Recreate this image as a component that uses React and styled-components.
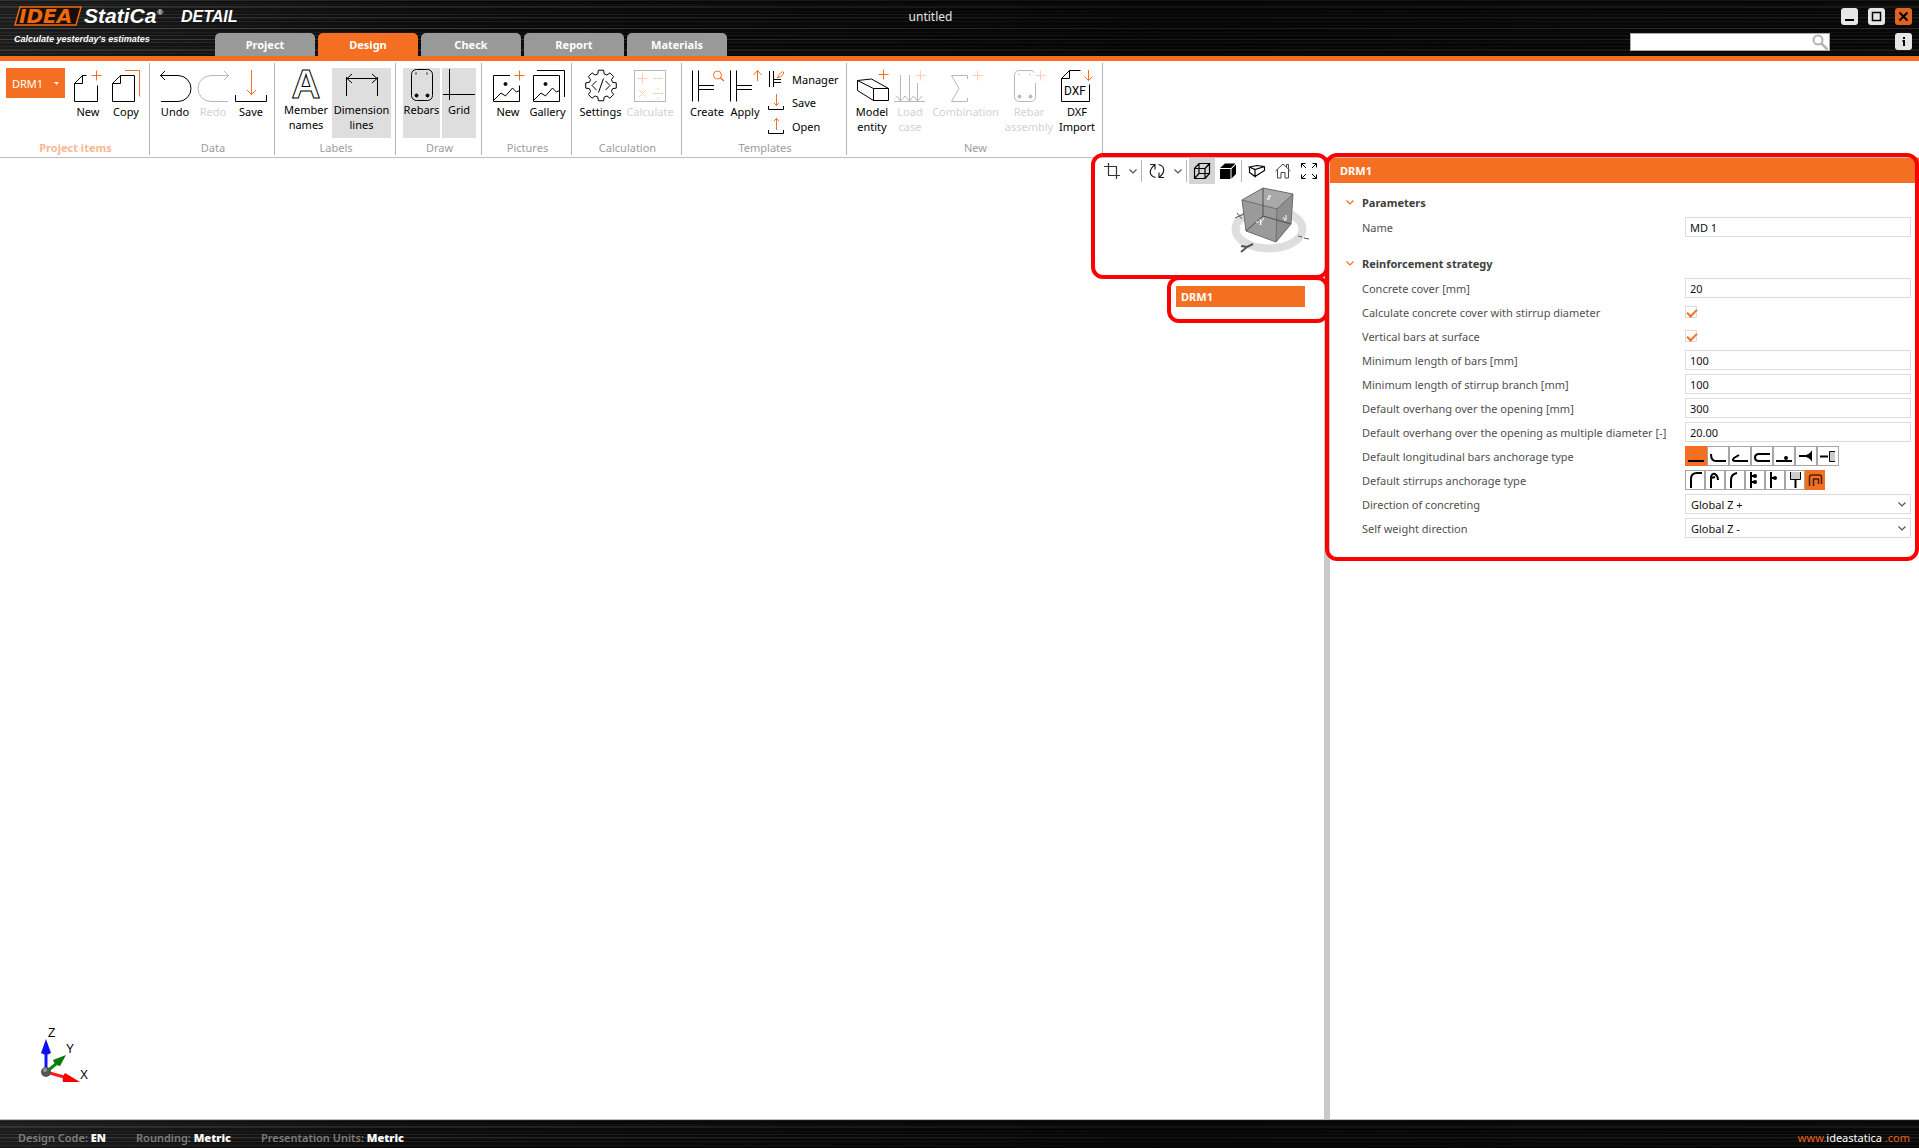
import React, { useState } from 'react'
import styled, { createGlobalStyle } from 'styled-components'


const orange = '#f46f22'
const paleOrange = '#fbcfb6'
const grey = '#b8b8b8'

const GlobalStyle = createGlobalStyle`
* {
    box-sizing: border-box;
}
body {
    margin: 0;
    background: #fff;
    color: #000;
    font-family: "Noto Sans", "Open Sans", sans-serif;
    font-size: 11px;
}
button, input, select {
    font: inherit;
    color: inherit;
    margin: 0;
}
svg {
    display: block;
    flex: none;
    overflow: visible;
}
`
const Page = styled.div`
min-height: 100vh;
display: flex;
flex-direction: column;
`
const brushed = `
background-color: #0b0b0b;
background-image:
    linear-gradient(100deg, rgba(255, 255, 255, 0.07), rgba(0, 0, 0, 0) 22%, rgba(0, 0, 0, 0.5) 60%, rgba(0, 0, 0, 0.3)),
    repeating-linear-gradient(180deg, rgba(255, 255, 255, 0.09) 0 1px, transparent 1px 4px, rgba(255, 255, 255, 0.05) 4px 5px, transparent 5px 7px),
    repeating-linear-gradient(180deg, transparent 0 6px, rgba(255, 255, 255, 0.12) 6px 7px, transparent 7px 11px);
`

/* ---------- header ---------- */

const Header = styled.header`
${brushed}
display: flex;
height: 61px;
border-bottom: 5px solid ${orange};
`
const Brand = styled.div`
width: 215px;
padding: 6px 0 0 14px;
color: #fff;
white-space: nowrap;
`
const Tagline = styled.div`
margin-top: 4px;
font: italic bold 9px/14px "Liberation Sans", sans-serif;
`
const HeaderBody = styled.div`
flex: 1;
display: flex;
flex-direction: column;
justify-content: space-between;
`
const TitleRow = styled.div`
display: flex;
padding-top: 8px;
`
const WindowTitle = styled.div`
flex: 1;
color: #e6e6e6;
font-size: 12px;
line-height: 17px;
text-align: center;
`
const WindowButtons = styled.div`
width: 273px;
display: flex;
justify-content: flex-end;
gap: 10px;
padding-right: 7px;
`
const WindowButton = styled.button`
width: 17px;
height: 17px;
padding: 0;
border: 0;
border-radius: 3px;
background: ${(props) => (props.$close ? '#dd6322' : '#e6e6e6')};
`
const TabRow = styled.div`
display: flex;
align-items: flex-start;
`
const Tabs = styled.nav`
flex: 1;
display: flex;
gap: 3px;
`
const Tab = styled.button`
width: 100px;
height: 23px;
padding: 0;
border: 0;
border-radius: 5px 5px 0 0;
background: ${(props) => (props.$active ? orange : '#999')};
color: #fff;
font-weight: 700;
`
const SearchBox = styled.label`
display: flex;
align-items: center;
width: 200px;
height: 18px;
padding-right: 1px;
background: #fff;
border: 1px solid #aaa;

input {
    flex: 1;
    min-width: 0;
    border: 0;
    outline: none;
    background: transparent;
}
`
const InfoSlot = styled.div`
width: 89px;
display: flex;
justify-content: flex-end;
padding-right: 7px;
`

/* ---------- ribbon ---------- */

const Ribbon = styled.div`
display: flex;
padding: 2px 0;
border-bottom: 1px solid #bdbdbd;
`
const Group = styled.section`
height: 92px;
display: flex;
flex-direction: column;
padding: 5px 4px 0 6px;
border-right: 1px solid #b5b5b5;
`
const GroupItems = styled.div`
height: 70px;
display: flex;
justify-content: center;
gap: ${(props) => props.$gap || 0}px;
padding: 0 ${(props) => props.$pad || 0}px;
`
const GroupLabel = styled.div`
color: ${(props) => (props.$accent ? '#f9b792' : '#9c9c9c')};
font-weight: ${(props) => (props.$accent ? 700 : 400)};
line-height: 19px;
text-align: center;
`
const RibbonButton = styled.button`
width: ${(props) => props.$width}px;
height: 70px;
display: flex;
flex-direction: column;
align-items: center;
gap: ${(props) => (props.$tight ? 1 : 2)}px;
padding: ${(props) => (props.$tight ? 1 : 2)}px 0 0;
border: 0;
background: ${(props) => (props.$on ? '#dedede' : 'transparent')};
color: #000;
line-height: 15px;

&:disabled {
    color: #d2d2d2;
}
span {
    white-space: pre;
}
`
const ItemButton = styled.button`
width: 59px;
height: 30px;
display: flex;
align-items: center;
justify-content: space-between;
margin-right: 4px;
padding: 0 6px;
border: 0;
background: ${orange};
color: #fff;
`
const SmallList = styled.div`
width: 78px;
display: flex;
flex-direction: column;
`
const SmallButton = styled.button`
height: 24px;
display: flex;
align-items: center;
gap: 7px;
padding: 0 0 0 4px;
border: 0;
background: transparent;
`

/* ---------- workspace ---------- */

const Workspace = styled.main`
flex: 1;
display: flex;
`
const Canvas = styled.section`
flex: 1;
display: flex;
flex-direction: column;
align-items: flex-end;
`
const Splitter = styled.div`
width: 6px;
background: #c9c9c9;
`
const Frame = styled.div`
position: absolute;
inset: ${(props) => props.$inset || '-5px'};
border: 4px solid #fe0000;
border-radius: 12px;
pointer-events: none;
z-index: 1;
`
const ViewArea = styled.div`
position: relative;
width: 228px;
height: 117px;
display: flex;
flex-direction: column;
align-items: flex-end;
gap: 3px;
padding-right: 2px;
`
const ViewToolbar = styled.div`
display: flex;
align-items: center;
`
const ViewButton = styled.button`
width: ${(props) => (props.$narrow ? 16 : 26)}px;
height: 26px;
display: flex;
align-items: center;
justify-content: center;
padding: 0;
border: 0;
background: ${(props) => (props.$on ? '#d5d5d5' : 'transparent')};
`
const ViewDivider = styled.div`
width: 1px;
height: 22px;
margin-right: 2px;
background: #b5b5b5;
`
const CubeSlot = styled.div`
padding-right: 8px;
`
const TagArea = styled.div`
position: relative;
width: 152px;
margin-top: 6px;
padding: 5px 19px 11px 4px;
`
const Tag = styled.button`
width: 100%;
height: 21px;
display: block;
padding: 0 5px;
border: 0;
background: ${orange};
color: #fff;
font-weight: 700;
line-height: 20px;
text-align: left;
`
const TriadSlot = styled.div`
align-self: flex-start;
margin-top: auto;
padding: 0 0 29px 36px;
`

/* ---------- properties ---------- */

const Side = styled.aside`
flex: 0 0 589px;
`
const Properties = styled.div`
position: relative;
padding-bottom: 20px;
`
const PropertiesTitle = styled.div`
padding: 0 10px;
background: ${orange};
color: #fff;
font-weight: 700;
line-height: 25px;
`
const Section = styled.section`
padding: 7px 8px 0 32px;

& + & {
    padding-top: 11px;
}
`
const SectionTitle = styled.button`
height: 24px;
display: flex;
align-items: center;
gap: 8px;
margin: 0 0 2px -16px;
padding: 0;
border: 0;
background: transparent;
color: #404040;
font-weight: 700;
`
const Row = styled.div`
height: 24px;
display: grid;
grid-template-columns: 323px 1fr;
align-items: center;
padding-bottom: 2px;
color: #505050;
white-space: nowrap;
`
const TextField = styled.input`
width: 100%;
height: 20px;
padding: 0 4px;
border: 1px solid #dcdcdc;
border-radius: 0;
outline: none;
color: #111;
`
const Check = styled.input`
appearance: none;
width: 12px;
height: 12px;
display: block;
position: relative;
border: 1px solid #dcdcdc;

&:checked::after {
    content: "";
    position: absolute;
    left: 1px;
    top: 2px;
    width: 8px;
    height: 4px;
    border: solid ${orange};
    border-width: 0 0 2px 2px;
    transform: rotate(-45deg);
}
`
const SelectBox = styled.div`
display: grid;
align-items: center;

select, svg {
    grid-area: 1 / 1;
}
select {
    appearance: none;
    width: 100%;
    height: 20px;
    padding: 0 5px;
    border: 1px solid #dcdcdc;
    border-radius: 0;
    background: #fff;
    color: #111;
}
svg {
    justify-self: end;
    margin-right: 5px;
    pointer-events: none;
}
`
const Choices = styled.div`
display: flex;
`
const Choice = styled.button`
width: ${(props) => props.$width}px;
height: 20px;
display: flex;
align-items: center;
justify-content: center;
padding: 0;
border: 1px solid ${(props) => (props.$on ? orange : '#a6a6a6')};
background: ${(props) => (props.$on ? orange : '#fff')};
`

/* ---------- footer ---------- */

const Footer = styled.footer`
${brushed}
height: 29px;
display: flex;
align-items: center;
gap: 30px;
padding: 7px 9px 0 18px;
border-top: 1px solid #b9beb9;
color: #7d7d7d;
font-weight: 600;

b {
    color: #fff;
}
`
const SiteLink = styled.a`
margin-left: auto;
color: #e8631c;
font-weight: 400;
text-decoration: none;

span {
    color: #fff;
}
`

/* ---------- icons ---------- */

const Icon = ({ size = 32, height, color = '#000', children }) => (
    <svg width={size} height={height || size} fill="none" stroke={color} strokeWidth="1" aria-hidden="true">
        {children}
    </svg>
)

const Plus = ({ x, y, pale }) => (
    <path d={`M${x} ${y - 5}v10M${x - 5} ${y}h10`} stroke={pale ? paleOrange : orange} />
)

const Chevron = ({ color = '#555' }) => (
    <Icon size={8} height={5} color={color}><path d="M.5 .5L4 4L7.5 .5" strokeWidth="1.2" /></Icon>
)

const teeth = () => {
    const points = []
    for (let i = 0; i < 8; i++) {
        const a = (i * Math.PI) / 4
        const spots = [[-0.27, 12], [-0.17, 15.5], [0.17, 15.5], [0.27, 12]]
        spots.forEach(([d, r]) => points.push(`${16 + r * Math.sin(a + d)},${15.5 - r * Math.cos(a + d)}`))
    }
    return points.join(' ')
}

const picture = 'M1.5 30.5L9 23L13.5 26L20.5 18L24.5 22L27.5 20.5'
const beam = 'M1.5 .5V31.5M7.5 .5V31.5M7.5 15.5H23M7.5 19.5H23'

const icons = {
    newItem: <Icon><path d="M14.5 5.5H10.5L2.5 13.5V31.5H25.5V15.5M10.5 5.5V13.5H2.5" /><Plus x={24.5} y={5.5} /></Icon>,
    copy: <Icon><path d="M10.5 5.5H24.5V31.5H2.5V13.5ZM10.5 5.5V13.5H2.5" /><path d="M15 .5H29.5V26.5" stroke={orange} /></Icon>,
    undo: <Icon><path d="M1.5 5.5H19a13 13 0 0 1 0 26H2M6 1L1.5 5.5L6 10" /></Icon>,
    redo: <Icon color={grey}><path d="M31.5 5.5H14a13 13 0 0 0 0 26H31M27 1L31.5 5.5L27 10" /></Icon>,
    save: <Icon><path d="M.5 25V31.5H31.5V25" /><path d="M16.5 0V24.5M12 20L16.5 24.5L21 20" stroke={orange} /></Icon>,
    names: (
        <Icon>
            <text x="16" y="29" textAnchor="middle" fontFamily="Liberation Sans, sans-serif" fontWeight="700" fontSize="40">A</text>
        </Icon>
    ),
    dimension: <Icon><path d="M.5 8V27M31.5 8V27M1 9.5H31M6 5L1 9.5L6 14M26 5L31 9.5L26 14" /></Icon>,
    rebars: (
        <Icon>
            <rect x="5.5" y=".5" width="21" height="31" rx="5" />
            <path d="M9.5 4.5h1M20.5 4.5h1" strokeWidth="2" />
            <circle cx="10.5" cy="26.5" r="1.5" fill="#000" /><circle cx="21.5" cy="26.5" r="1.5" fill="#000" />
        </Icon>
    ),
    grid: <Icon><path d="M6.5 0V31M0 25.5H32" /></Icon>,
    pictureNew: <Icon><path d={`M18 5.5H1.5V31.5H27.5V15.5${picture}`} /><circle cx="13.5" cy="14" r="1.5" fill="#000" /><Plus x={27.5} y={5.5} /></Icon>,
    gallery: <Icon><path d={`M1.5 5.5H27.5V31.5H1.5Z${picture}M5 .5H32.5V27`} /><circle cx="13.5" cy="14" r="1.5" fill="#000" /></Icon>,
    settings: <Icon><polygon points={teeth()} strokeLinejoin="round" /><path d="M11.5 11L7 15.5L11.5 20M20.5 11L25 15.5L20.5 20M18.5 8.5L13.5 22.5" /></Icon>,
    calculate: (
        <Icon color={grey}>
            <rect x=".5" y=".5" width="31" height="31" />
            <g stroke={paleOrange}>
                <path d="M8.5 3.5v10M3.5 8.5h10M19 8.5h10M5 20l7 7M12 20l-7 7M19 23.5h10" />
                <path d="M23.5 19h1M23.5 28h1" strokeWidth="2" />
            </g>
        </Icon>
    ),
    create: <Icon><path d={beam} /><g stroke={orange}><circle cx="26.5" cy="5" r="4" /><path d="M29.5 8L33 11" strokeWidth="1.5" /></g></Icon>,
    apply: <Icon><path d={beam} /><path d="M28.5 11V.5M24.5 5L28.5 .5L32.5 5" stroke={orange} /></Icon>,
    manager: <Icon size={17}><path d="M1.5 0V16M5.5 0V16M5.5 8.5H13M5.5 11.5H13" /><path d="M9.5 7L11 3.5L14.5 .5L16 2L13 5.5Z" stroke={orange} /></Icon>,
    saveSmall: <Icon size={17}><path d="M.5 12V15.5H15.5V12" /><path d="M8.5 0V11.5M6 9L8.5 11.5L11 9" stroke={orange} /></Icon>,
    openSmall: <Icon size={17}><path d="M.5 12V15.5H15.5V12" /><path d="M8.5 12V.5M6 3L8.5 .5L11 3" stroke={orange} /></Icon>,
    entity: <Icon><path d="M17.5 18.5H32.5V30.5H17.5ZM17.5 18.5L1.5 10.5L15.5 9L32.5 18.5M1.5 10.5V20.5L17.5 30.5" /><Plus x={27.5} y={4.5} /></Icon>,
    load: <Icon color={grey}><path d="M0 31.5H31M6.5 5V31M15.5 5V31M23.5 13V31M2.5 26L6.5 31L11 26L15.5 31L19.5 26L23.5 31L28 26" /><Plus x={26.5} y={5.5} pale /></Icon>,
    combination: <Icon color={grey}><path d="M17.5 9V5.5H1.5L9 18.5L1.5 31.5H17.5V28" /><Plus x={27.5} y={5.5} pale /></Icon>,
    rebarAssembly: (
        <Icon color={grey}>
            <path d="M21.5 2.5Q20 .5 17 .5H6.5Q1.5 .5 1.5 5.5V26.5Q1.5 31.5 6.5 31.5H17.5Q22.5 31.5 22.5 26.5V13" />
            <path d="M5.5 4.5h1M16.5 4.5h1" strokeWidth="2" />
            <circle cx="6.5" cy="26.5" r="1.5" fill={grey} /><circle cx="17.5" cy="26.5" r="1.5" fill={grey} />
            <Plus x={27.5} y={5.5} pale />
        </Icon>
    ),
    dxf: (
        <Icon>
            <path d="M19.5 .5H8.5L.5 8.5V31.5H28.5V14.5M8.5 .5V8.5H.5" />
            <text x="14" y="25" textAnchor="middle" fontFamily="Roboto, sans-serif" fontSize="12" fill="#000" stroke="none">DXF</text>
            <path d="M27.5 0V10.5M23.5 6.5L27.5 10.5L31.5 6.5" stroke={orange} />
        </Icon>
    ),
    crop: <Icon size={16} color="#333"><path d="M4.5 0V12.5H16M0 3.5H12.5V16" strokeWidth="1.2" /></Icon>,
    rotate: <Icon size={16} color="#222"><path d="M6.5 14.5C0 13 -.5 7 5.5 2M1 1.5H6V6.5M9.5 1.500C16 3 16.500 9 10.500 14M15 14.500H10V9.500" strokeWidth="1.2" /></Icon>,
    wireCube: <Icon size={16}><path d="M.5 5.5H11V15.5H.5ZM.5 5.5L5 .5H15.5L11 5.5M15.5 .5V10.5L11 15.5M5 .5V10.5H15.5M5 10.5L.5 15.5" strokeWidth="1.2" /></Icon>,
    solidCube: <Icon size={16}><path d="M0 6H10.5V16H0ZM0 5L5 .5H15.5L11 5ZM11.5 6L16 1.5V11L11.5 15.5Z" fill="#000" stroke="none" /></Icon>,
    slab: <Icon size={16} height={12}><path d="M.5 2L8 .5L15.5 1.5L6 4.5ZM.5 2V7.5L6 11.5V4.5M6 11.5L15.5 5.5V1.5" strokeWidth="1.2" /></Icon>,
    home: <Icon size={16} color="#444"><path d="M.5 8L8 1L15.5 8M2.5 6.5V15H6V9.5H10V15H13.5V6.5M11.5 4V1.5H13.5V6" /></Icon>,
    expand: <Icon size={16}><path d="M.5 4.5V.5H4.5M.5 .5L5 5M11.5 .5H15.5V4.5M15.5 .5L11 5M.5 11.5V15.5H4.5M.5 15.5L5 11M15.5 11.5V15.5H11.5M15.5 15.5L11 11" /></Icon>,
}

const Logo = () => (
    <svg width="200" height="22" role="img" aria-label="IDEA StatiCa DETAIL">
        <path d="M6 1H67L62 19H1Z" fill="#1a0d04" stroke="#ee6a10" strokeWidth="1.5" />
        <g fontStyle="italic" fontFamily="Liberation Sans, sans-serif" fontWeight="700">
            <text x="5" y="17" fontSize="20" fontFamily="DejaVu Sans, sans-serif" fill="#ee6a10">IDEA</text>
            <text x="70" y="17" fontSize="21" fill="#fff">StatiCa</text>
            <text x="143" y="9" fontSize="8" fill="#fff">®</text>
            <text x="167" y="16" fontSize="16" fill="#fff">DETAIL</text>
        </g>
    </svg>
)

const ViewCube = () => (
    <svg width="84" height="66" role="img" aria-label="View cube">
        <ellipse cx="39" cy="42" rx="33.5" ry="19.5" fill="none" stroke="#dedede" strokeWidth="8" />
        <path d="M33 1L63 7L61 37L46 55L16 44L12 13Z" fill="#9a9a9a" />
        <path d="M33 1L63 7L47 22L12 13Z" fill="#a9a9a9" />
        <path d="M47 22L63 7L61 37L46 55Z" fill="#8f8f8f" />
        <path d="M33 1L63 7L61 37L46 55L16 44L12 13ZM12 13L47 22L63 7M47 22L46 55" fill="none" stroke="#6d6d6d" />
        <path d="M33 1V29L16 44M33 29L61 37" fill="none" stroke="#4f4f4f" />
        <g stroke="#fff" fill="none">
            <path d="M37 12L41 9M38 9L41 9M37 12L40 12" />
            <path d="M26 35H29M30 32L31 38M34 31L31 35L30 38M53 30L55 33M56 28V33L54 33" />
        </g>
        <g stroke="#555" fill="none">
            <path d="M5 31L14 27M7 26L12 32M68 49L72 50M74 51L79 52" />
            <path d="M11 65L17 60M11 59L17 60L23 57" strokeWidth="2" />
        </g>
    </svg>
)

const Triad = () => (
    <svg width="60" height="66" role="img" aria-label="Axes X Y Z">
        <path d="M10 48V29" stroke="#1414ff" strokeWidth="3" />
        <path d="M10 15L15 29Q10 32 5 29Z" fill="#0f0ff5" />
        <path d="M10 48L20 40" stroke="#0a8a0a" strokeWidth="3" />
        <path d="M30 31L24 42Q18 41 17 36Z" fill="#067a06" />
        <path d="M10 48L28 53" stroke="#ff1a1a" strokeWidth="3" />
        <path d="M44 58L29 49Q26 53 27 58Z" fill="#f80000" />
        <circle cx="10" cy="48" r="5" fill="#555" />
        <circle cx="9" cy="46" r="2" fill="#999" />
        <g fontFamily="Liberation Sans, sans-serif" fontSize="12" fill="#000">
            <text x="12" y="13">Z</text>
            <text x="30" y="29">Y</text>
            <text x="44" y="55">X</text>
        </g>
    </svg>
)

const bars = [
    ['Straight bar', <path key="a" d="M2 14H18" />],
    ['Bend', <path key="b" d="M3 7Q3 14 8 14H18" />],
    ['Hook', <path key="c" d="M9 8L4 11Q1 14 6 14H18" />],
    ['Loop', <path key="d" d="M18 7H7Q3 7 3 10.5Q3 14 7 14H18" />],
    ['Welded transverse bar', <g key="e"><path d="M2 14H18" /><circle cx="12" cy="11" r="2" fill="#000" stroke="none" /></g>],
    ['Headed bar', <g key="f"><path d="M3 9H13" /><path d="M10 8Q14 7 16 3V15Q14 11 10 10Z" fill="#000" stroke="none" /></g>],
    ['Plate', <g key="g"><path d="M2 9.5H10" /><path d="M17 4.5H11.5V14.5H17" fill="#ccc" strokeWidth="1" /></g>],
]

const stirrups = [
    ['Bend', <path key="a" d="M5 17V8Q5 2 11 2H16" />],
    ['Hook', <path key="b" d="M5 17V6Q6 2 9 3Q12 5 12 9M5 7L9 6" />],
    ['Angled bend', <path key="c" d="M5 17V9Q5 3 11 2" />],
    ['Two transverse bars', <g key="d"><path d="M5 1V17M5 5H9M5 11H9" /><circle cx="9" cy="5" r="2" fill="#000" stroke="none" /><circle cx="9" cy="11" r="2" fill="#000" stroke="none" /></g>],
    ['One transverse bar', <g key="e"><path d="M5 1V17M5 7H9" /><circle cx="9" cy="7" r="2" fill="#000" stroke="none" /></g>],
    ['Plate', <g key="f"><path d="M4.5 1V8.5H14.5V1" fill="#ccc" strokeWidth="1" /><path d="M9.5 9V17" /></g>],
    ['Closed', <path key="g" d="M3.5 15V6Q3.5 4 6 4H13Q15.5 4 15.5 6V13M7.5 15V8H12.5V13" strokeWidth="1.5" stroke="#4a2008" />],
]

/* ---------- parts ---------- */

const Tool = ({ icon, label, width, ...rest }) => (
    <RibbonButton $width={width} {...rest}>
        {icons[icon]}
        <span>{label}</span>
    </RibbonButton>
)

const RibbonGroup = ({ label, gap, pad, accent, children }) => (
    <Group>
        <GroupItems $gap={gap} $pad={pad}>{children}</GroupItems>
        <GroupLabel $accent={accent}>{label}</GroupLabel>
    </Group>
)

const TextRow = ({ id, label, value }) => (
    <Row>
        <label htmlFor={id}>{label}</label>
        <TextField id={id} type="text" defaultValue={value} />
    </Row>
)

const CheckRow = ({ id, label }) => (
    <Row>
        <label htmlFor={id}>{label}</label>
        <Check id={id} type="checkbox" defaultChecked />
    </Row>
)

const ChoiceRow = ({ id, label, options, width, initial }) => {
    const [selected, setSelected] = useState(initial)
    return (
        <Row>
            <span id={id}>{label}</span>
            <Choices role="group" aria-labelledby={id}>
                {options.map(([name, drawing], i) => (
                    <Choice
                        key={name}
                        type="button"
                        aria-label={name}
                        aria-pressed={i === selected}
                        $on={i === selected}
                        $width={width}
                        onClick={() => setSelected(i)}
                    >
                        <svg width={width - 2} height="18" fill="none" stroke="#000" strokeWidth="2">{drawing}</svg>
                    </Choice>
                ))}
            </Choices>
        </Row>
    )
}

const SelectRow = ({ id, label, value }) => (
    <Row>
        <label htmlFor={id}>{label}</label>
        <SelectBox>
            <select id={id} defaultValue={value}>
                <option>Global Z +</option>
                <option>Global Z -</option>
            </select>
            <Chevron />
        </SelectBox>
    </Row>
)

const tabs = ['Project', 'Design', 'Check', 'Report', 'Materials']

const App = () => {
    const [tab, setTab] = useState('Design')

    return (
        <Page>
            <GlobalStyle />
            <Header>
                <Brand>
                    <Logo />
                    <Tagline>Calculate yesterday's estimates</Tagline>
                </Brand>
                <HeaderBody>
                    <TitleRow>
                        <WindowTitle>untitled</WindowTitle>
                        <WindowButtons>
                            <WindowButton aria-label="Minimize">
                                <Icon size={17}><path d="M4 12H13" strokeWidth="2" /></Icon>
                            </WindowButton>
                            <WindowButton aria-label="Maximize">
                                <Icon size={17}><rect x="4.5" y="4.5" width="8" height="8" strokeWidth="1.5" /></Icon>
                            </WindowButton>
                            <WindowButton aria-label="Close" $close>
                                <Icon size={17}><path d="M4.5 4.5L12.5 12.5M12.5 4.5L4.5 12.5" strokeWidth="2" /></Icon>
                            </WindowButton>
                        </WindowButtons>
                    </TitleRow>
                    <TabRow>
                        <Tabs>
                            {tabs.map((name) => (
                                <Tab key={name} $active={name === tab} onClick={() => setTab(name)}>{name}</Tab>
                            ))}
                        </Tabs>
                        <SearchBox>
                            <input type="text" aria-label="Search" />
                            <Icon size={16} color="#b5b5b5">
                                <circle cx="6" cy="6" r="4.5" strokeWidth="2" />
                                <path d="M9.5 9.5L15.5 15.5" strokeWidth="2.5" />
                            </Icon>
                        </SearchBox>
                        <InfoSlot>
                            <WindowButton aria-label="Info">
                                <Icon size={17}><path d="M8 5H10M7.500 8H10M9 8V13" strokeWidth="2" /></Icon>
                            </WindowButton>
                        </InfoSlot>
                    </TabRow>
                </HeaderBody>
            </Header>

            <Ribbon>
                <RibbonGroup label="Project items" accent>
                    <ItemButton>
                        DRM1
                        <svg width="5" height="3"><path d="M0 0H5L2.5 3Z" fill="#fff" /></svg>
                    </ItemButton>
                    <Tool icon="newItem" label="New" width={38} />
                    <Tool icon="copy" label="Copy" width={38} />
                </RibbonGroup>
                <RibbonGroup label="Data">
                    <Tool icon="undo" label="Undo" width={38} />
                    <Tool icon="redo" label="Redo" width={38} disabled />
                    <Tool icon="save" label="Save" width={38} />
                </RibbonGroup>
                <RibbonGroup label="Labels" gap={1}>
                    <Tool icon="names" label={'Member\nnames'} width={50} $tight />
                    <Tool icon="dimension" label={'Dimension\nlines'} width={59} $tight $on />
                </RibbonGroup>
                <RibbonGroup label="Draw" gap={2} pad={1}>
                    <Tool icon="rebars" label="Rebars" width={37} $tight $on />
                    <Tool icon="grid" label="Grid" width={34} $tight $on />
                </RibbonGroup>
                <RibbonGroup label="Pictures">
                    <Tool icon="pictureNew" label="New" width={40} />
                    <Tool icon="gallery" label="Gallery" width={39} />
                </RibbonGroup>
                <RibbonGroup label="Calculation">
                    <Tool icon="settings" label="Settings" width={45} />
                    <Tool icon="calculate" label="Calculate" width={54} disabled />
                </RibbonGroup>
                <RibbonGroup label="Templates">
                    <Tool icon="create" label="Create" width={38} />
                    <Tool icon="apply" label="Apply" width={38} />
                    <SmallList>
                        <SmallButton>{icons.manager}Manager</SmallButton>
                        <SmallButton>{icons.saveSmall}Save</SmallButton>
                        <SmallButton>{icons.openSmall}Open</SmallButton>
                    </SmallList>
                </RibbonGroup>
                <RibbonGroup label="New">
                    <Tool icon="entity" label={'Model\nentity'} width={38} />
                    <Tool icon="load" label={'Load\ncase'} width={38} disabled />
                    <Tool icon="combination" label="Combination" width={73} disabled />
                    <Tool icon="rebarAssembly" label={'Rebar\nassembly'} width={54} disabled />
                    <Tool icon="dxf" label={'DXF\nImport'} width={42} />
                </RibbonGroup>
            </Ribbon>

            <Workspace>
                <Canvas>
                    <ViewArea>
                        <ViewToolbar>
                            <ViewButton aria-label="Crop">{icons.crop}</ViewButton>
                            <ViewButton aria-label="Crop options" $narrow><Chevron /></ViewButton>
                            <ViewDivider />
                            <ViewButton aria-label="Rotate">{icons.rotate}</ViewButton>
                            <ViewButton aria-label="Rotate options" $narrow><Chevron /></ViewButton>
                            <ViewDivider />
                            <ViewButton aria-label="Wireframe" $on>{icons.wireCube}</ViewButton>
                            <ViewButton aria-label="Solid">{icons.solidCube}</ViewButton>
                            <ViewDivider />
                            <ViewButton aria-label="Perspective">{icons.slab}</ViewButton>
                            <ViewButton aria-label="Home view">{icons.home}</ViewButton>
                            <ViewButton aria-label="Zoom all">{icons.expand}</ViewButton>
                        </ViewToolbar>
                        <CubeSlot><ViewCube /></CubeSlot>
                        <Frame $inset="-5px -5px -4px" />
                    </ViewArea>
                    <TagArea>
                        <Tag>DRM1</Tag>
                        <Frame />
                    </TagArea>
                    <TriadSlot><Triad /></TriadSlot>
                </Canvas>
                <Splitter />
                <Side>
                    <Properties>
                        <PropertiesTitle>DRM1</PropertiesTitle>
                        <Section>
                            <SectionTitle><Chevron color={orange} />Parameters</SectionTitle>
                            <TextRow id="name" label="Name" value="MD 1" />
                        </Section>
                        <Section>
                            <SectionTitle><Chevron color={orange} />Reinforcement strategy</SectionTitle>
                            <TextRow id="cover" label="Concrete cover [mm]" value="20" />
                            <CheckRow id="stirrupCover" label="Calculate concrete cover with stirrup diameter" />
                            <CheckRow id="verticalBars" label="Vertical bars at surface" />
                            <TextRow id="barLength" label="Minimum length of bars [mm]" value="100" />
                            <TextRow id="branchLength" label="Minimum length of stirrup branch [mm]" value="100" />
                            <TextRow id="overhang" label="Default overhang over the opening [mm]" value="300" />
                            <TextRow id="overhangMultiple" label="Default overhang over the opening as multiple diameter [-]" value="20.00" />
                            <ChoiceRow id="barAnchorage" label="Default longitudinal bars anchorage type" options={bars} width={22} initial={0} />
                            <ChoiceRow id="stirrupAnchorage" label="Default stirrups anchorage type" options={stirrups} width={20} initial={6} />
                            <SelectRow id="concreting" label="Direction of concreting" value="Global Z +" />
                            <SelectRow id="selfWeight" label="Self weight direction" value="Global Z -" />
                        </Section>
                        <Frame $inset="-5px 0 0 -5px" />
                    </Properties>
                </Side>
            </Workspace>

            <Footer>
                <div>Design Code: <b>EN</b></div>
                <div>Rounding: <b>Metric</b></div>
                <div>Presentation Units: <b>Metric</b></div>
                <SiteLink href="#">www.<span>ideastatica</span> .com</SiteLink>
            </Footer>
        </Page>
    )
}

export default App
